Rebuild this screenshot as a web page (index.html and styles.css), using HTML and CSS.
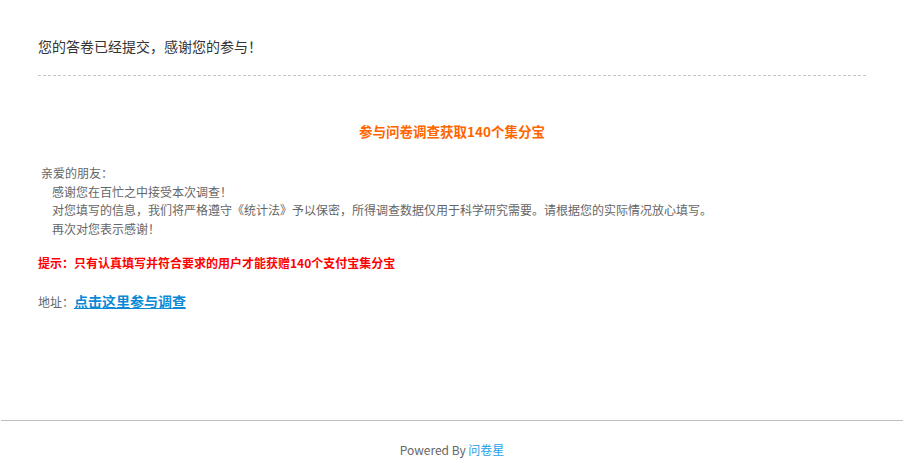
FILE: index.html
```html
<!DOCTYPE html>
<html lang="zh-CN">
<head>
<meta charset="utf-8">
<title>问卷提交成功</title>
<link rel="stylesheet" href="styles.css">
</head>
<body>
<div class="page">
  <div class="main">
    <div class="title">您的答卷已经提交，感谢您的参与！</div>
    <div class="content">
      <div class="heading">参与问卷调查获取140个集分宝</div>
      <div class="letter">
        <div class="greet">亲爱的朋友：</div>
        <div class="indent">感谢您在百忙之中接受本次调查！</div>
        <div class="indent">对您填写的信息，我们将严格遵守《统计法》予以保密，所得调查数据仅用于科学研究需要。请根据您的实际情况放心填写。</div>
        <div class="indent">再次对您表示感谢！</div>
      </div>
      <div class="tip">提示：只有认真填写并符合要求的用户才能获赠140个支付宝集分宝</div>
      <div class="addr">地址：<a class="addr-link" href="#">点击这里参与调查</a></div>
    </div>
  </div>
  <div class="footer">Powered By <a class="footer-link" href="#">问卷星</a></div>
</div>
</body>
</html>
```

FILE: styles.css
```css
html, body {
  margin: 0;
  padding: 0;
  background: #fff;
}
body {
  font-family: "Noto Sans CJK SC", "Noto Sans", sans-serif;
  font-size: 12px;
  color: #666;
  text-spacing-trim: space-all;
}
.page {
  width: 906px;
  height: 474px;
  overflow: hidden;
}
.main {
  padding: 0 40px 0 38px;
}
.title {
  margin-top: 36px;
  line-height: 20px;
  font-size: 14px;
  color: #333;
  padding-bottom: 19px;
  border-bottom: 1px dashed #c8c8c8;
}
.heading {
  margin-top: 45px;
  line-height: 20px;
  text-align: center;
  font-size: 13.5px;
  font-weight: bold;
  color: #ff6600;
}
.letter {
  margin-top: 23px;
  line-height: 18.5px;
}
.greet {
  padding-left: 3px;
}
.indent {
  padding-left: 14px;
}
.tip {
  margin-top: 16px;
  line-height: 18px;
  font-weight: bold;
  color: #ff0000;
}
.addr {
  margin-top: 19px;
  line-height: 20px;
}
.addr-link {
  font-size: 14px;
  font-weight: bold;
  color: #0a8ad6;
  text-decoration: underline;
}
.footer {
  margin: 108px 3px 0 1px;
  border-top: 1px solid #bdbdbd;
  padding-top: 19px;
  line-height: 20px;
  text-align: center;
  color: #666;
}
.footer-link {
  color: #1e9fe8;
  text-decoration: none;
}
```
